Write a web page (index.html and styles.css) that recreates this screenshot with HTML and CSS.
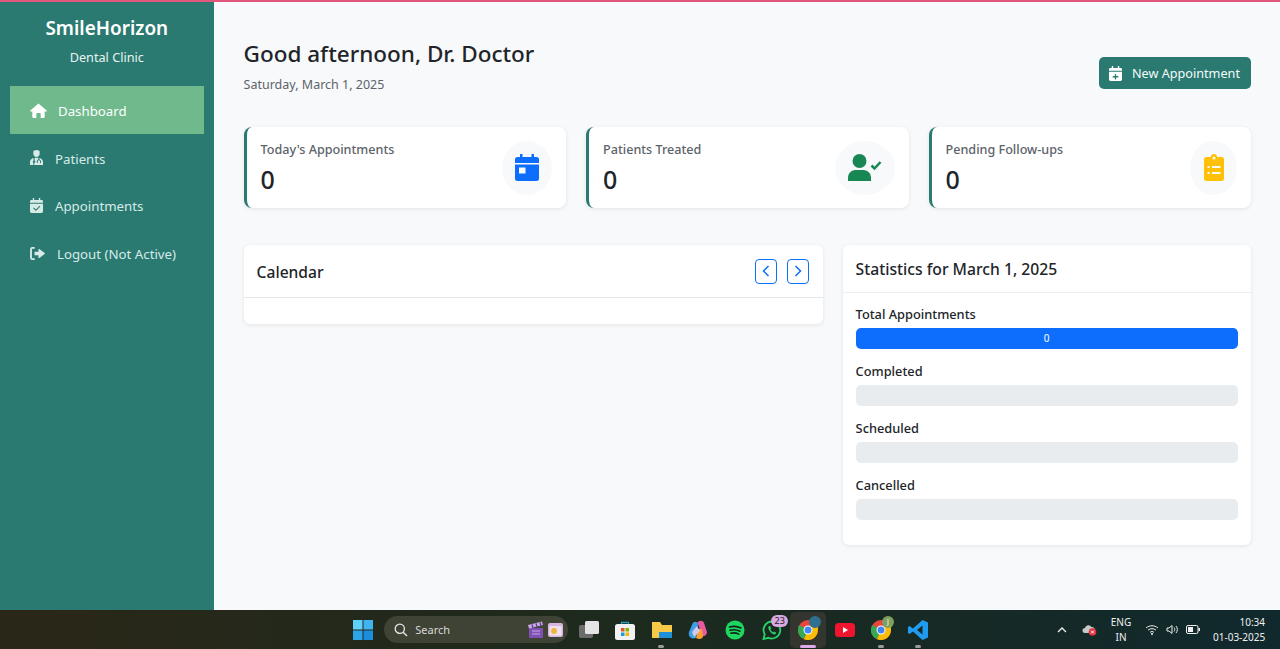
FILE: index.html
```html
<!DOCTYPE html>
<html lang="en">
<head>
<meta charset="utf-8">
<title>SmileHorizon</title>
<link rel="stylesheet" href="styles.css">
</head>
<body>
<div class="topline"></div>
<div class="app">
  <aside class="sidebar">
    <div class="brand">
      <h1>SmileHorizon</h1>
      <p>Dental Clinic</p>
    </div>
    <nav class="nav">
      <a class="nav-item active"><svg class="nav-icon home" viewBox="0 0 18 16"><path fill="#fff" d="M9 0.5 0.3 8.1c-.4.4-.1 1 .4 1H2.4V15c0 .5.4 1 1 1h3.3v-4.6c0-.4.3-.7.7-.7h3.2c.4 0 .7.3.7.7V16h3.3c.6 0 1-.5 1-1V9.1h1.7c.5 0 .8-.6.4-1z"/></svg><span>Dashboard</span></a>
      <a class="nav-item"><svg class="nav-icon" viewBox="0 0 14 16"><path fill="#d6ebe6" d="M7 0C5 0 3.6 1 3.6 1.8V4c0 1.900 1.500 3.500 3.400 3.500S10.400 5.900 10.400 4V1.800C10.400 1 9 0 7 0z"/><path fill="#d6ebe6" d="M3.800 8.600C1.600 9 0 10.700 0 13v3h3.500l.3-2.200a1.300 1.300 0 0 1 0-2.400zM5 8.400v2.900a1.300 1.300 0 0 1-.2 2.400L4.500 16H14v-3c0-2.300-1.600-4-3.800-4.400v1.600c1 .3 1.600 1.100 1.600 2.100v1.500h-1v-1.500c0-.8-.6-1.300-1.200-1.300s-1.200.5-1.200 1.300v1.500h-1v-1.500c0-1 .6-1.800 1.600-2.100V8.400c-1.500-.3-2.500-.3-4 0z"/></svg><span>Patients</span></a>
      <a class="nav-item"><svg class="nav-icon" viewBox="0 0 14 16"><path fill="#d6ebe6" fill-rule="evenodd" d="M3 0h1.500v2h5V0H11v2h1.500A1.500 1.500 0 0 1 14 3.500V5H0V3.500A1.500 1.500 0 0 1 1.500 2H3zM0 6h14v8.500a1.500 1.500 0 0 1-1.500 1.500h-11A1.500 1.500 0 0 1 0 14.500zm10.300 2.300L6.300 12.300 4.200 10.200l-.8.800 2.900 2.900 4.800-4.800z"/></svg><span>Appointments</span></a>
      <a class="nav-item logout"><svg class="nav-icon wide" viewBox="0 0 16 14"><path fill="#d6ebe6" d="M5 0H2.500A2.500 2.500 0 0 0 0 2.500v9A2.500 2.500 0 0 0 2.500 14H5v-2H2.500a.5.500 0 0 1-.5-.5v-9a.5.500 0 0 1 .5-.5H5zM10 2.200c-.4-.2-1-.100-1 .6V5H5.500c-.4 0-.7.300-.7.700v2.600c0 .4.300.7.700.7H9v2.200c0 .7.600.8 1 .6l5.700-4.200c.4-.3.400-.900 0-1.200z"/></svg><span>Logout (Not Active)</span></a>
    </nav>
  </aside>
  <main class="main">
    <header class="page-head">
      <div>
        <h2>Good afternoon, Dr. Doctor</h2>
        <p>Saturday, March 1, 2025</p>
      </div>
      <button class="new-btn"><svg class="btn-icon" viewBox="0 0 14 16"><path fill="#fff" fill-rule="evenodd" d="M3 0h1.500v2h5V0H11v2h1.500A1.500 1.500 0 0 1 14 3.500V5H0V3.500A1.500 1.500 0 0 1 1.500 2H3zM0 6h14v8.500a1.500 1.500 0 0 1-1.500 1.500h-11A1.500 1.500 0 0 1 0 14.500zm6.300 2.500v2.300H4v1.400h2.300v2.300h1.400v-2.300H10v-1.400H7.700V8.500z"/></svg>New Appointment</button>
    </header>
    <section class="stats">
      <article class="stat">
        <div><h3>Today's Appointments</h3><strong>0</strong></div>
        <div class="stat-icon small"><svg width="24" height="27" viewBox="0 0 24 27"><path fill="#0d6efd" fill-rule="evenodd" d="M5 0h2.500v3h9V0H19v3h2.500A2.500 2.500 0 0 1 24 5.500V9H0V5.500A2.500 2.500 0 0 1 2.500 3H5zM0 10.500h24v14a2.500 2.500 0 0 1-2.500 2.500h-19A2.500 2.500 0 0 1 0 24.500zM4 13.500v6h6.500v-6z"/></svg></div>
      </article>
      <article class="stat">
        <div><h3>Patients Treated</h3><strong>0</strong></div>
        <div class="stat-icon large"><svg width="34" height="27" viewBox="0 0 34 27"><circle cx="11.500" cy="7" r="7" fill="#198754"/><path fill="#198754" d="M0 27v-3c0-5.500 4-8 8-8h7c4.500 0 8 3 8 8v3z"/><path fill="none" stroke="#198754" stroke-width="2.500" d="M23.500 11.500l3 3 6-6.500"/></svg></div>
      </article>
      <article class="stat">
        <div><h3>Pending Follow-ups</h3><strong>0</strong></div>
        <div class="stat-icon medium"><svg width="20" height="27" viewBox="0 0 20 27"><path fill="#ffc107" fill-rule="evenodd" d="M10 0c1.700 0 3 1.200 3.300 3H17.500A2.500 2.500 0 0 1 20 5.500v19a2.500 2.500 0 0 1-2.500 2.500h-15A2.500 2.500 0 0 1 0 24.500v-19A2.500 2.500 0 0 1 2.500 3h4.200C7 1.200 8.300 0 10 0zm0 2.500a1.500 1.500 0 1 0 0 3 1.500 1.500 0 0 0 0-3zM3.500 12v2h2v-2zm4.500 0v2h8.500v-2zM3.500 18v2h2v-2zm4.500 0v2h8.500v-2z"/></svg></div>
      </article>
    </section>
    <section class="panels">
      <div class="panel calendar">
        <div class="calendar-head">
          <h3>Calendar</h3>
          <div class="arrows">
            <button class="arrow"><svg width="8" height="12" viewBox="0 0 8 12"><path fill="none" stroke="#0d6efd" stroke-width="1.500" d="M6.500 1 1.500 6l5 5"/></svg></button>
            <button class="arrow"><svg width="8" height="12" viewBox="0 0 8 12"><path fill="none" stroke="#0d6efd" stroke-width="1.500" d="M1.500 1l5 5-5 5"/></svg></button>
          </div>
        </div>
        <div class="calendar-body"></div>
      </div>
      <div class="panel statistics">
        <div class="stat-head"><h3>Statistics for March 1, 2025</h3></div>
        <div class="stat-body">
          <div class="metric"><h4>Total Appointments</h4><div class="track"><div class="fill">0</div></div></div>
          <div class="metric"><h4>Completed</h4><div class="track"></div></div>
          <div class="metric"><h4>Scheduled</h4><div class="track"></div></div>
          <div class="metric"><h4>Cancelled</h4><div class="track"></div></div>
        </div>
      </div>
    </section>
  </main>
</div>
<footer class="taskbar">
  <div class="task-center">
    <div class="slot"><svg class="ti" viewBox="0 0 20 20"><rect width="9.500" height="9.500" fill="#5fd0f8"/><rect x="10.500" width="9.500" height="9.500" fill="#40b4f0"/><rect y="10.500" width="9.500" height="9.500" fill="#2ba4e8"/><rect x="10.500" y="10.500" width="9.500" height="9.500" fill="#1a8ddc"/></svg></div>
    <div class="search">
      <svg width="14" height="14" viewBox="0 0 14 14"><circle cx="5.800" cy="5.800" r="4.600" fill="none" stroke="#e8e8e8" stroke-width="1.300"/><path stroke="#e8e8e8" stroke-width="1.400" d="M9.200 9.200 13 13"/></svg>
      <span>Search</span>
      <i class="search-art">
        <svg width="17" height="17" viewBox="0 0 17 17"><rect x="1" y="7" width="14" height="10" rx="1" fill="#7e50b4"/><path d="M0 4 14 .5l1 3.500L1 7.500z" fill="#c9a7e6"/><path d="M4 3.300l1 3.500M8 2.300l1 3.500M12 1.300l1 3.500" stroke="#5a3a88" stroke-width="1.200"/><path d="M4 10h8M4 13h8" stroke="#c9a7e6"/></svg>
        <svg width="15" height="14" viewBox="0 0 15 14"><rect width="15" height="14" rx="2" fill="#d7b7e0"/><rect x="1.500" y="3" width="12" height="9.500" rx="1" fill="#efe2f0"/><circle cx="6" cy="8" r="3" fill="#f0b43c"/></svg>
      </i>
    </div>
    <div class="slot"><svg class="ti" viewBox="0 0 20 20"><rect y="5" width="14" height="13" rx="2" fill="#6c6c6c"/><rect x="6" y="1" width="14" height="13" rx="1.500" fill="#e4e4e4"/></svg></div>
    <div class="slot"><svg class="ti" viewBox="0 0 20 20"><path d="M6.500 4V2.500h7V4" fill="none" stroke="#1aa0c8" stroke-width="1.300"/><rect y="4" width="20" height="16" rx="2.500" fill="#f2f2f2"/><rect x="6" y="8" width="3.500" height="3.500" fill="#e8502a"/><rect x="10.500" y="8" width="3.500" height="3.500" fill="#7fb800"/><rect x="6" y="12.500" width="3.500" height="3.500" fill="#1a9ae0"/><rect x="10.500" y="12.500" width="3.500" height="3.500" fill="#f4b400"/></svg></div>
    <div class="slot running"><svg class="ti" viewBox="0 0 20 20"><path d="M0 2h8l2 3h10v13H0z" fill="#f7c948"/><rect x="7" y="12" width="13" height="6" fill="#1f8fd8"/></svg></div>
    <div class="slot"><svg class="ti" viewBox="0 0 20 20"><path d="M4 5c1-4 5-4 6-1l-2 14c-6 2-8-3-7-6z" fill="#3aa0e8"/><path d="M9 3c2-3 6-3 7 0l3 9c0 3-3 5-5 4L10 4z" fill="#e85aa0"/><path d="M8 18c3 2 7 1 7-2l-1-7-4 0z" fill="#f8a030"/><path d="M4 12l5-6 3 5-6 6z" fill="#d8c8f0"/></svg></div>
    <div class="slot"><svg class="ti" viewBox="0 0 20 20"><circle cx="10" cy="10" r="9.500" fill="#1ed760"/><path d="M4.500 7c4-1 8-.8 11.500 1M5 10.200c3.500-.8 7-.5 10 1M5.800 13.200c3-.6 5.500-.3 8 .9" fill="none" stroke="#102018" stroke-width="1.600" stroke-linecap="round"/></svg></div>
    <div class="slot"><svg class="ti" viewBox="0 0 20 20"><path d="M10 1.500a8.500 8.500 0 0 0-7.300 12.700L1.500 19l4.900-1.200A8.500 8.500 0 1 0 10 1.500z" fill="none" stroke="#25d366" stroke-width="1.800"/><path d="M7 6c-1 1-1 3 1 5.500s4.500 3.500 5.500 2.500l.8-1.300-2.300-1.200-.9.900c-1-.4-2.200-1.700-2.700-2.800l.8-.8L8.200 6z" fill="#25d366"/></svg><b class="badge wa">23</b></div>
    <div class="slot current"><svg class="ti" viewBox="0 0 20 20"><use href="#chrome"/></svg><b class="badge profile"></b></div>
    <div class="slot"><svg class="ti" viewBox="0 0 20 14"><rect width="20" height="14" rx="3.500" fill="#f0142f"/><path d="M8 4v6l5-3z" fill="#fff"/></svg></div>
    <div class="slot running"><svg class="ti" viewBox="0 0 20 20"><use href="#chrome"/></svg><b class="badge green">J</b></div>
    <div class="slot running"><svg class="ti" viewBox="0 0 20 20"><path d="M14.500 0 20 2.500v15L14.500 20 5 11.500 1.500 14 0 13V7l1.500-1L5 8.500zM14.500 5.500 9 10l5.500 4.500z" fill="#1f9cf0"/></svg></div>
  </div>
  <div class="tray">
    <svg width="10" height="6" viewBox="0 0 10 6"><path d="M1 5l4-4 4 4" fill="none" stroke="#f0f0f0" stroke-width="1.300"/></svg>
    <svg class="cloud" width="15" height="12" viewBox="0 0 15 12"><path d="M3 9a2.500 2.500 0 0 1 0-5 3.500 3.500 0 0 1 6.500-1A3 3 0 0 1 10 9z" fill="#c8c8c8"/><circle cx="10.500" cy="8" r="3.800" fill="#e03040"/><path d="M9 6.500l3 3m0-3-3 3" stroke="#fff"/></svg>
    <div class="lang">ENG<br>IN</div>
    <div class="sys">
      <svg width="14" height="11" viewBox="0 0 14 11"><path d="M1 4c3.500-3 8.500-3 12 0M3 6.200c2.500-2 5.500-2 8 0M5 8.300c1.200-.9 2.800-.9 4 0" fill="none" stroke="#f0f0f0"/><circle cx="7" cy="10" r="1" fill="#f0f0f0"/></svg>
      <svg width="13" height="11" viewBox="0 0 13 11"><path d="M1 4v3h2l3 2.500v-8L3 4z" fill="none" stroke="#f0f0f0"/><path d="M8 3.500c1 1 1 3 0 4M10 2c1.800 2 1.800 5 0 7" fill="none" stroke="#f0f0f0"/></svg>
      <svg width="14" height="9" viewBox="0 0 14 9"><rect x=".5" y=".5" width="11.500" height="8" rx="1.500" fill="none" stroke="#f0f0f0"/><rect x="2" y="2" width="5" height="5" fill="#f0f0f0"/><rect x="12.500" y="3" width="1.500" height="3" fill="#f0f0f0"/></svg>
    </div>
    <div class="clock">10:34<br>01-03-2025</div>
  </div>
</footer>
<svg class="defs" width="0" height="0"><defs><g id="chrome"><circle cx="10" cy="10" r="10" fill="#e8453c"/><path d="M10 10 1.300 5A10 10 0 0 0 6 19.200z" fill="#34a853"/><path d="M10 10 6 19.200A10 10 0 0 0 20 10V6H10z" fill="#fbbc05"/><circle cx="10" cy="10" r="4.500" fill="#fff"/><circle cx="10" cy="10" r="3.500" fill="#4285f4"/></g></defs></svg>
</body>
</html>
```
FILE: styles.css
```css
* { box-sizing: border-box; }
html, body { margin: 0; height: 100%; overflow: hidden; }
body {
  display: flex;
  flex-direction: column;
  height: 649px;
  font-family: "Noto Sans", "Open Sans", sans-serif;
  color: #212529;
  background: #f8f9fa;
}
h1, h2, h3, h4, p { margin: 0; }
.topline { height: 2px; background: #e2587c; flex: none; }
.app { display: flex; height: 608px; flex: none; }

.sidebar { width: 213.600px; flex: none; background: #2a7a72; padding: 0 10px; }
.brand { text-align: center; color: #fff; padding-top: 14px; height: 84px; }
.brand h1 { font-size: 18.900px; font-weight: 600; line-height: 25px; }
.brand p { font-size: 12.700px; line-height: 18px; margin-top: 7px; color: #e8f4f0; }
.nav { display: flex; flex-direction: column; width: 193.500px; }
.nav-item {
  display: flex;
  align-items: center;
  height: 47.670px;
  padding-left: 20px;
  color: #d6ebe6;
  font-size: 13.250px;
}
.nav-item span { padding-top: 2px; }
.nav-item.active { background: #6fb98c; color: #fff; height: 48px; }
.nav-icon { width: 13px; height: 15px; margin-right: 12px; flex: none; }
.nav-icon.home { width: 17px; margin-right: 11px; }
.nav-icon.wide { width: 15px; height: 13px; }

.main { flex: 1; padding: 0 29px 0 30px; min-width: 0; }
.page-head { display: flex; justify-content: space-between; align-items: center; height: 125px; padding-top: 2px; }
.page-head h2 { font-size: 22.500px; font-weight: 500; line-height: 32px; }
.page-head p { font-size: 12.500px; line-height: 18px; margin-top: 6px; color: #5c636a; }
.new-btn {
  display: flex;
  align-items: center;
  height: 32px;
  width: 152px;
  padding: 0 0 0 10px;
  border: 0;
  border-radius: 5px;
  background: #2a7a72;
  color: #f4fbf9;
  font: 12.650px "Noto Sans", sans-serif;
  margin-top: 15px;
}
.btn-icon { width: 13px; height: 15px; margin-right: 10px; }

.stats { display: grid; grid-template-columns: repeat(3, 1fr); gap: 20px; }
.stat {
  display: flex;
  justify-content: space-between;
  align-items: center;
  height: 81px;
  padding: 0 14px 0 14px;
  background: #fff;
  border-left: 3px solid #2a7a72;
  border-radius: 8px;
  box-shadow: 0 1px 4px rgba(0, 0, 0, .09);
}
.stat h3 { font-size: 12.600px; font-weight: 500; line-height: 18px; color: #5c636a; padding-top: 0; margin-top: 2px; }
.stat strong { display: block; font-size: 25px; font-weight: 500; line-height: 34px; margin-top: 3px; }
.stat-icon { display: flex; align-items: center; justify-content: center; height: 54px; border-radius: 50%; background: #f8f9fa; }
.stat-icon.small { width: 50px; }
.stat-icon.large { width: 60px; }
.stat-icon.medium { width: 47px; }

.panels { display: grid; grid-template-columns: 579px 408px; gap: 20px; margin-top: 37px; align-items: start; }
.panel { background: #fff; border-radius: 6px; box-shadow: 0 1px 4px rgba(0, 0, 0, .09); }
.calendar-head { display: flex; justify-content: space-between; align-items: center; height: 53px; padding: 2px 14px 0 13px; border-bottom: 1px solid #e4e6e8; }
.calendar-head h3 { font-size: 15.600px; font-weight: 500; }
.arrows { display: flex; gap: 10px; margin-top: -2px; }
.arrow { display: flex; align-items: center; justify-content: center; width: 22px; height: 25px; padding: 0; background: #fff; border: 1px solid #0d6efd; border-radius: 4px; }
.calendar-body { height: 26px; }
.stat-head { height: 48px; padding: 0 13px; display: flex; align-items: center; border-bottom: 1px solid #eceef0; }
.stat-head h3 { font-size: 15.700px; font-weight: 500; }
.stat-body { padding: 12px 13px 26px; }
.metric { margin-bottom: 14px; height: 43px; }
.metric:last-child { margin-bottom: 0; }
.metric h4 { font-size: 12.800px; font-weight: 500; line-height: 18px; margin-bottom: 5px; }
.track { height: 21px; border-radius: 5px; background: #e9ecef; overflow: hidden; }
.fill { height: 100%; background: #0d6efd; color: #fff; font-size: 10px; line-height: 21px; text-align: center; }

.taskbar {
  position: relative;
  height: 39px;
  flex: none;
  background: linear-gradient(90deg, #2a2718 0%, #1d2a1e 50%, #10292d 100%);
  color: #f0f0f0;
}
.task-center { display: flex; align-items: center; height: 39px; padding-left: 345px; }
.ti { width: 20px; height: 20px; flex: none; display: block; }
.search {
  display: flex;
  align-items: center;
  width: 184px;
  height: 27px;
  margin: 0 2px 0 2.700px;
  padding: 0 5px 0 10px;
  border-radius: 14px;
  background: #3e4335;
  font-size: 11px;
  color: #d8d8d8;
  flex: none;
}
.search span { margin-left: 7px; }
.search-art { display: flex; gap: 3px; margin-left: auto; align-items: center; }
.slot { position: relative; width: 36.600px; height: 36px; display: flex; align-items: center; justify-content: center; border-radius: 5px; flex: none; }
.slot.running::after { content: ""; position: absolute; left: 15px; bottom: 0; width: 6px; height: 3px; border-radius: 2px; background: #9a9a9a; }
.slot.current { background: #35352f; }
.slot.current::after { content: ""; position: absolute; left: 10px; bottom: 0; width: 16px; height: 3px; border-radius: 2px; background: #e0a8e8; }
.badge { position: absolute; display: block; font-weight: 400; text-align: center; border-radius: 7px; }
.badge.wa { left: 18px; top: 3px; width: 17px; height: 12px; background: #d8a8e0; color: #222; font-size: 9px; line-height: 12px; }
.badge.profile { left: 19px; top: 4px; width: 12px; height: 12px; background: #2f6f8f; }
.badge.green { left: 19px; top: 4px; width: 12px; height: 12px; background: #7f9f5f; color: #fff; font-size: 7px; line-height: 12px; }

.tray { position: absolute; top: 0; right: 15px; height: 39px; display: flex; align-items: center; font-size: 10px; line-height: 15px; color: #f0f0f0; }
.cloud { margin-left: 15px; }
.lang { width: 30px; margin-left: 9px; text-align: center; }
.sys { display: flex; align-items: center; gap: 7px; margin-left: 9px; }
.clock { width: 52px; margin-left: 13px; text-align: right; white-space: nowrap; }
.defs { position: absolute; }
```
